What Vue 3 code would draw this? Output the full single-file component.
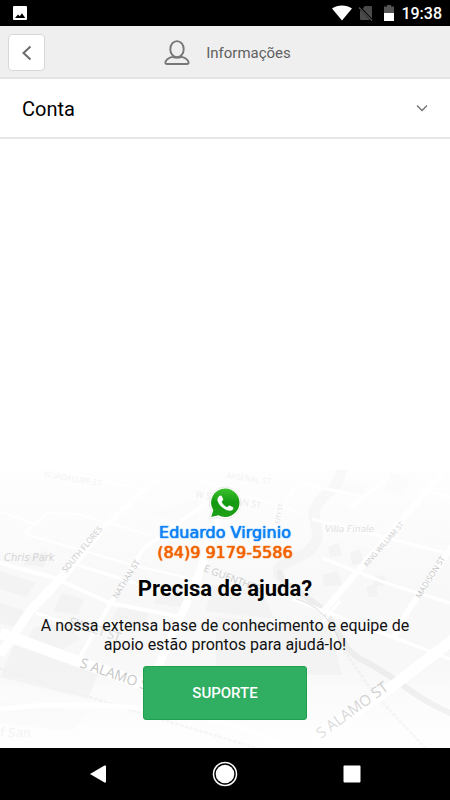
<script setup>
import { ref } from 'vue';

const contaAberta=ref(false);

const contato={
    nome: "Eduardo Virginio",
    telefone: "(84)9 9179-5586"
}

// nombres de calles del mapa: posición, ángulo, tamaño y color
const calles=[
    { id:1, texto:"SOUTH FLORES", x:66, y:104, giro:-50, size:8, color:"#c2c2c2" },
    { id:2, texto:"NATHAN ST", x:117, y:130, giro:-58, size:8, color:"#c2c2c2" },
    { id:3, texto:"E GUENTHER", x:203, y:102, giro:21, size:10, color:"#cccccc" },
    { id:4, texto:"GUADALUPE ST", x:44, y:8, giro:9, size:8, color:"#e8e8e8" },
    { id:5, texto:"ARSENAL ST", x:226, y:9, giro:8, size:8, color:"#e8e8e8" },
    { id:6, texto:"W SHERIDAN ST", x:195, y:28, giro:10, size:9, color:"#e2e2e2" },
    { id:7, texto:"CITY ST", x:279, y:55, giro:-78, size:6, color:"#cccccc" },
    { id:8, texto:"KING WILLIAM ST", x:367, y:98, giro:-49, size:7, color:"#c2c2c2" },
    { id:9, texto:"MADISON ST", x:420, y:130, giro:-58, size:8, color:"#c2c2c2" },
    { id:10, texto:"SWEET ST", x:68, y:156, giro:18, size:12, color:"#d6d6d6" },
    { id:11, texto:"S ALAMO ST", x:79, y:198, giro:19, size:14, color:"#c6c6c6" },
    { id:12, texto:"S ALAMO ST", x:321, y:270, giro:-36, size:15, color:"#cacaca" }
]
</script>
<template>
    <div class="pantalla">
        <div class="estado">
            <svg class="foto" viewBox="0 0 14 14" width="14" height="14" aria-hidden="true">
                <rect width="14" height="14" rx="1" fill="#fff"/>
                <path d="M2 12 5 8.5 6.7 10.3 9 7.2 12.2 12Z" fill="#000"/>
            </svg>
            <svg viewBox="0 0 20 16" width="20" height="16" aria-hidden="true">
                <path d="M0 3.500C5.500-.6 14.500-.6 20 3.500L10 15.500Z" fill="#fff"/>
            </svg>
            <svg class="sim" viewBox="0 0 15 16" width="15" height="16" aria-hidden="true">
                <path d="M6 1H12Q13 1 13 2V15H2Q1 15 1 14V6Z" fill="#4a4a4a"/>
                <path d="M0 1.500 13.500 16" stroke="#000" stroke-width="2.500"/>
                <path d="M0 2.500 13 15.700" stroke="#555" stroke-width="1.200"/>
            </svg>
            <svg class="bateria" viewBox="0 0 10 16" width="10" height="16" aria-hidden="true">
                <path d="M3 0H7V1.500H10V8H0V1.500H3Z" fill="#555"/>
                <path d="M0 8H10V16H0Z" fill="#fff"/>
            </svg>
            <span class="hora">19:38</span>
        </div>
        <header class="cabecera">
            <button class="volver" type="button" aria-label="Voltar">
                <svg viewBox="0 0 10 16" width="10" height="16">
                    <path d="M8.500 1.500 1.500 8l7 6.500" fill="none" stroke="#6b6b6b" stroke-width="2"/>
                </svg>
            </button>
            <h1 class="titulo">
                <svg viewBox="0 0 26 26" width="26" height="26" aria-hidden="true">
                    <g fill="none" stroke="#777" stroke-width="1.900">
                        <ellipse cx="13" cy="9.200" rx="6.700" ry="8.100"/>
                        <path d="M8.500 16.800C5 17.700 2 18.900 1.400 22.500Q1.300 24 3 24H23Q24.700 24 24.600 22.500C24 18.900 21 17.700 17.500 16.800Q13 18.500 8.500 16.800"/>
                    </g>
                </svg>
                <span>Informações</span>
            </h1>
        </header>
        <button class="conta" type="button" :aria-expanded="contaAberta" @click="contaAberta=!contaAberta">
            <span>Conta</span>
            <svg viewBox="0 0 12 10" width="12" height="10" aria-hidden="true">
                <path d="M1 1.500 6 6.500l5-5" fill="none" stroke="#707070" stroke-width="1.300"/>
            </svg>
        </button>
        <main class="espacio"></main>
        <section class="ayuda">
            <svg class="mapa" viewBox="0 0 450 280" preserveAspectRatio="xMidYMid slice" aria-hidden="true">
                <defs>
                    <linearGradient id="fondo" x1="0" y1="0" x2="0" y2="1">
                        <stop offset="0" stop-color="#fdfdfd"/>
                        <stop offset=".45" stop-color="#f8f8f8"/>
                        <stop offset=".7" stop-color="#f8f8f8"/>
                        <stop offset="1" stop-color="#fefefe"/>
                    </linearGradient>
                    <linearGradient id="niebla" x1="0" y1="0" x2="0" y2="1">
                        <stop offset="0" stop-color="#fff" stop-opacity=".5"/>
                        <stop offset=".35" stop-color="#fff" stop-opacity="0"/>
                        <stop offset=".72" stop-color="#fff" stop-opacity="0"/>
                        <stop offset="1" stop-color="#fff" stop-opacity=".5"/>
                    </linearGradient>
                </defs>
                <rect width="450" height="280" fill="url(#fondo)"/>
                <!-- manzanas -->
                <g fill="#f3f3f3">
                    <path d="M0 102 36 114 26 128 0 120ZM28 86 48 82 44 98 24 96ZM62 124 84 130 78 146 54 142ZM0 134 26 142 14 158 0 154ZM34 158 66 154 80 170 60 182 26 172ZM14 176 98 205 88 230 0 208Z"/>
                    <path d="M160 120 186 128 180 138 154 134ZM212 116 262 122 274 150 206 142ZM120 136 150 144 142 158 112 150Z"/>
                    <path d="M328 78 338 74 342 86 330 88ZM350 84 360 80 364 94 352 96ZM322 106 338 102 342 116 324 118ZM366 118 376 114 378 128 368 128ZM374 108 384 106 386 116 374 118Z"/>
                    <path d="M216 148 330 158 342 206 216 206Z"/>
                </g>
                <g fill="#f9f9f9">
                    <path d="M152 45 198 30 196 52 166 50ZM330 10 370 14 360 30 338 24ZM390 4 410 8 404 26 384 22ZM420 66 450 70 450 78 424 74ZM0 232 90 244 72 262 0 254Z"/>
                </g>
                <!-- río -->
                <g fill="none" stroke-linecap="round">
                    <path d="M341 0C340 24 316 26 314 44C314 60 326 68 306 84C286 94 274 96 280 108" stroke="#f4f4f4" stroke-width="11"/>
                    <path d="M280 104C278 114 300 122 320 138C340 158 340 178 360 190C392 204 412 228 450 244" stroke="#ededed" stroke-width="6"/>
                    <path d="M342 178 372 222 426 280M0 200 140 244 260 280" stroke="#f1f1f1" stroke-width="3" stroke-dasharray="1 4"/>
                </g>
                <!-- calles -->
                <g fill="none" stroke="#fff" stroke-linejoin="round">
                    <path d="M168-2 100 62" stroke-width="5"/>
                    <path d="M100 62 63 107 30 142 0 186" stroke-width="9"/>
                    <path d="M205 35 143 80 110 135 80 188" stroke-width="4"/>
                    <path d="M218 50 200 102 185 138 157 200" stroke-width="8"/>
                    <path d="M453-8 398 55 358 102 322 144" stroke-width="6"/>
                    <path d="M460 66 408 142 394 168" stroke-width="6"/>
                    <path d="M455 169 385 223 312 272" stroke-width="11"/>
                    <path d="M0 164 80 193 145 216" stroke-width="11"/>
                    <path d="M0 94 55 109 110 134 180 148" stroke-width="4"/>
                    <path d="M48 44 26 62 28 66 140 98 202 112M48 44 78 45 150 66M55 0 148 22M0 42 34 55" stroke-width="2"/>
                    <path d="M78 96 160 122 200 130M36 144 90 162" stroke-width="3"/>
                    <path d="M322 89 386 114 450 134M292 130 382 164 450 190M312 50 450 85M300 14 364 28M390 8 350 38M450 28 420 20M340 132 322 154" stroke-width="3"/>
                    <path d="M296 17 268 62 236 90M195 10 300 44" stroke-width="2"/>
                    <path d="M0 240C80 230 210 236 290 280" stroke-width="5"/>
                </g>
                <path d="M296 130C320 136 334 156 340 174" fill="none" stroke="#dedede" stroke-width="1"/>
                <g class="rotulos">
                    <text v-for="calle in calles" :key="calle.id" :font-size="calle.size" :fill="calle.color" :transform="`translate(${calle.x} ${calle.y}) rotate(${calle.giro})`">{{ calle.texto }}</text>
                </g>
                <g class="lugares">
                    <text x="4" y="92" font-size="10" fill="#d2d2d2">Chris Park</text>
                    <text x="325" y="63" font-size="9" fill="#d8d8d8">Villa Finale</text>
                    <text x="0" y="268" font-size="12" fill="#ebebeb">f San</text>
                </g>
                <rect width="450" height="280" fill="url(#niebla)"/>
            </svg>
            <div class="contenido">
                <svg class="whatsapp" viewBox="0 0 34 34" width="34" height="34" role="img" aria-label="WhatsApp">
                    <defs>
                        <linearGradient id="verde" x1="0" y1="0" x2="0" y2="1">
                            <stop offset="0" stop-color="#3cc02c"/>
                            <stop offset=".5" stop-color="#149a10"/>
                            <stop offset="1" stop-color="#1fa01a"/>
                        </linearGradient>
                    </defs>
                    <path d="M17 1A16 16 0 1 1 10 31.500L1 33 3.500 25A16 16 0 0 1 17 1Z" fill="#fff" stroke="#ececec"/>
                    <path d="M17.200 2.500A14.200 14.200 0 1 1 10.500 29.200L3.200 31 5.300 24.200A14.200 14.200 0 0 1 17.200 2.500Z" fill="url(#verde)"/>
                    <path d="M11.200 10.200C12.200 9.300 13.500 9.400 13.900 10.300L15.200 13.300C15.500 14.200 13.600 15.300 13.800 15.900C14.800 18.300 16.700 20 19 21C19.800 21.300 20.800 19.200 21.700 19.600L25 21.200C25.900 21.700 25.400 23.300 24.500 24C22.500 25.500 19.300 24.900 15.800 22.600C12.900 20.600 10.600 18 9.700 15.200C9 13.100 9.700 11.300 11.200 10.200Z" fill="#fff"/>
                </svg>
                <div class="nombre">{{ contato.nome }}</div>
                <div class="telefono">{{ contato.telefone }}</div>
                <h2>Precisa de ajuda?</h2>
                <p>A nossa extensa base de conhecimento e equipe de apoio estão prontos para ajudá-lo!</p>
                <button class="suporte" type="button">SUPORTE</button>
            </div>
        </section>
        <nav class="navegacion">
            <button type="button" aria-label="Voltar">
                <svg viewBox="0 0 18 20" width="18" height="20"><path d="M1 10 15.500 1.500Q17 1 17 2.500V17.500Q17 19 15.500 18.500Z" fill="#fff"/></svg>
            </button>
            <button type="button" aria-label="Início">
                <svg viewBox="0 0 26 26" width="26" height="26"><circle cx="13" cy="13" r="11.500" fill="none" stroke="#fff" stroke-width="1.500"/><circle cx="13" cy="13" r="9.300" fill="#fff"/></svg>
            </button>
            <button type="button" aria-label="Recentes">
                <svg viewBox="0 0 18 18" width="18" height="18"><rect x=".5" y=".5" width="17" height="17" rx="1" fill="#fff"/></svg>
            </button>
        </nav>
    </div>
</template>
<style>
body{
    margin: 0;
    background: #fff;
}
</style>
<style scoped>
.pantalla{
    display: flex;
    flex-direction: column;
    min-height: 100vh;
    font-family: Roboto, sans-serif;
    color: #111;
}
button{
    font-family: inherit;
    margin: 0;
    padding: 0;
    border: 0;
    background: none;
    cursor: pointer;
}
svg{
    display: block;
    flex: none;
}
.estado{
    display: flex;
    align-items: center;
    box-sizing: border-box;
    height: 26px;
    padding: 0 8px 0 13px;
    background: #000;
    color: #fff;
}
.foto{
    margin-right: auto;
}
.sim{
    margin-left: 7px;
}
.bateria{
    margin: 0 7px 0 10px;
}
.hora{
    padding-top: 2px;
    font-size: 16px;
    font-weight: 500;
    line-height: 24px;
}
.cabecera{
    display: grid;
    grid-template-columns: 37px 1fr 32px;
    align-items: center;
    box-sizing: border-box;
    height: 53px;
    padding: 2px 8px 0;
    background: #efefef;
    border-bottom: 2px solid #e4e4e4;
}
.volver{
    display: flex;
    align-items: center;
    justify-content: center;
    height: 37px;
    background: #fff;
    border: 1px solid #d8d8d8;
    border-radius: 4px;
}
.titulo{
    display: flex;
    align-items: center;
    justify-content: center;
    gap: 16px;
    margin: 0;
    font-size: 15px;
    font-weight: 400;
    color: #606060;
}
.conta{
    display: flex;
    align-items: center;
    justify-content: space-between;
    box-sizing: border-box;
    height: 60px;
    padding: 2px 22px 0;
    border-bottom: 2px solid #e6e6e6;
    font-size: 20px;
    color: #000;
}
.espacio{
    flex: 1;
}
.ayuda{
    position: relative;
}
.mapa{
    position: absolute;
    inset: 0;
    width: 100%;
    height: 100%;
}
.rotulos{
    font-family: "Open Sans", sans-serif;
    font-weight: 500;
}
.lugares{
    font-family: "DejaVu Sans", sans-serif;
    font-style: italic;
}
.contenido{
    position: relative;
    display: flex;
    flex-direction: column;
    align-items: center;
    padding: 16px 24px 28px;
    text-align: center;
}
.whatsapp{
    margin-bottom: 3px;
}
.nombre, .telefono{
    font-family: "DejaVu Sans", sans-serif;
    font-size: 16px;
    line-height: 20px;
    text-shadow: 0 0 1px currentColor, 0 0 1px currentColor;
}
.nombre{
    color: #0f82f5;
}
.telefono{
    color: #f26200;
}
h2{
    margin: 11px 0 12px;
    font-size: 22px;
    font-weight: 700;
    line-height: 30px;
    color: #000;
}
p{
    margin: 0 0 12px;
    font-size: 16px;
    line-height: 19px;
}
.suporte{
    height: 54px;
    padding: 0 48px;
    background: #30ae62;
    border: 1px solid #1fa04f;
    border-radius: 3px;
    font-size: 15px;
    font-weight: 500;
    color: #fff;
}
.navegacion{
    display: grid;
    grid-template-columns: repeat(3, 127px);
    justify-content: center;
    height: 52px;
    background: #000;
}
.navegacion button{
    display: flex;
    align-items: center;
    justify-content: center;
}
</style>
